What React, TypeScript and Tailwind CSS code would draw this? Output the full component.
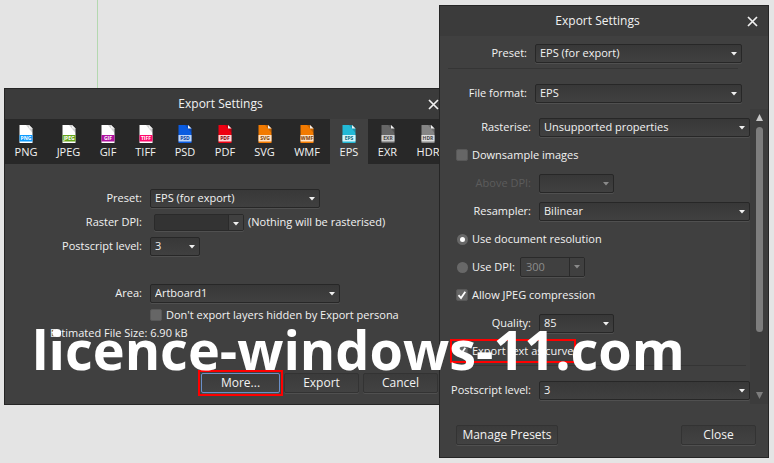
import type { ReactNode } from "react"

const formats = [
    { name: "PNG", page: "#ffffff", band: "#0d9bff", ink: "#ffffff" },
    { name: "JPEG", page: "#ffffff", band: "#65a51b", ink: "#ffffff" },
    { name: "GIF", page: "#ffffff", band: "#b0129f", ink: "#ffffff" },
    { name: "TIFF", page: "#ffffff", band: "#ff0a6c", ink: "#ffffff" },
    { name: "PSD", page: "#0a5be0", band: "#bcd4f8", ink: "#0b3f9c" },
    { name: "PDF", page: "#ee0012", band: "#ffd5d5", ink: "#7a0008" },
    { name: "SVG", page: "#f27a00", band: "#ffe2c4", ink: "#7a3c00" },
    { name: "WMF", page: "#f27a00", band: "#ffe2c4", ink: "#7a3c00" },
    { name: "EPS", page: "#22b9d6", band: "#d3f5fb", ink: "#0a6a7c" },
    { name: "EXR", page: "#666666", band: "#cfcfcf", ink: "#444444" },
    { name: "HDR", page: "#858585", band: "#dedede", ink: "#444444" },
]

function FileIcon({ name, page, band, ink }: { name: string; page: string; band: string; ink: string }) {
    return (
        <svg width="14" height="18" viewBox="0 0 14 18" aria-hidden="true">
            <path d="M0.5 0H10L13.5 3.5V18H0.5Z" fill={page} />
            <path d="M7 0H10L13.5 3.5V8Z" fill="#000" opacity="0.18" />
            <path d="M10 0L13.5 3.5H10Z" fill="#f2f2f2" />
            <rect x="0.5" y="10" width="13" height="6.5" fill={band} />
            <text x="7" y="15" textAnchor="middle" fontSize="5" fontWeight="700" fill={ink}>{name}</text>
        </svg>
    )
}

function Arrow({ dim = false }: { dim?: boolean }) {
    return (
        <svg width="6" height="4" viewBox="0 0 6 4" className="pointer-events-none absolute right-[5px] top-2" aria-hidden="true">
            <path d="M0 0H6L3 3.5Z" fill={dim ? "#8a8a8a" : "#f0f0f0"} />
        </svg>
    )
}

function Dropdown({ id, value, className, disabled = false }: { id: string; value: string; className: string; disabled?: boolean }) {
    return (
        <div className={`relative ${className}`}>
            <select id={id} disabled={disabled} className="block h-[19px] w-full appearance-none rounded-[2px] border border-[#272727] bg-linear-to-b from-[#383838] to-[#404040] pl-1 leading-4 shadow-[0_1px_0_#505050] outline-none">
                <option>{value}</option>
            </select>
            <Arrow dim={disabled} />
        </div>
    )
}

// Editable value with a drop arrow in its own cell
function Combo({ id, value, className, disabled = false }: { id: string; value: string; className: string; disabled?: boolean }) {
    return (
        <div className={`relative flex rounded-[2px] border border-[#2a2a2a] shadow-[0_1px_0_#505050] ${className}`}>
            <input id={id} defaultValue={value} disabled={disabled} className="w-0 grow border-r border-[#2a2a2a] pl-[5px] outline-none disabled:text-[#8c8c8c]" />
            <button type="button" disabled={disabled} aria-label="Show values" className="w-[14px] bg-[#404040]" />
            <svg width="6" height="4" viewBox="0 0 6 4" className="pointer-events-none absolute right-1 top-[7px]" aria-hidden="true">
                <path d="M0 0H6L3 3.5Z" fill={disabled ? "#8a8a8a" : "#f0f0f0"} />
            </svg>
        </div>
    )
}

function Checkbox({ label, checked = false }: { label: string; checked?: boolean }) {
    return (
        <label className="flex items-center gap-1 whitespace-nowrap">
            <span className="relative block size-3">
                <input type="checkbox" defaultChecked={checked} className="peer block size-3 appearance-none rounded-[2px] border border-[#585858] bg-[#666666]" />
                <svg viewBox="0 0 12 12" className="pointer-events-none absolute inset-0 hidden size-3 peer-checked:block" aria-hidden="true">
                    <path d="M2.5 6.2L5 9L9.3 2.8" fill="none" stroke="#ffffff" strokeWidth="1.8" />
                </svg>
            </span>
            {label}
        </label>
    )
}

function Radio({ id, checked = false }: { id: string; checked?: boolean }) {
    return (
        <input id={id} type="radio" name="resolution" defaultChecked={checked} className="mr-1 size-[11px] appearance-none rounded-full bg-[#686868] checked:border-[3px] checked:border-[#686868] checked:bg-white" />
    )
}

function Button({ children, className }: { children: ReactNode; className: string }) {
    return (
        <button type="button" className={`h-5 rounded-[2px] border bg-linear-to-b from-[#3b3b3b] to-[#424242] text-xs leading-4 shadow-[0_1px_0_#505050] ${className}`}>
            {children}
        </button>
    )
}

function TitleBar() {
    return (
        <header className="flex h-[30px] items-center bg-[#3b3b3b] pr-[10px]">
            <h2 className="grow pl-2 text-center text-xs">Export Settings</h2>
            <button type="button" aria-label="Close window">
                <svg width="11" height="11" viewBox="0 0 11 11" aria-hidden="true">
                    <path d="M1 1L10 10M10 1L1 10" stroke="#f0f0f0" strokeWidth="1.7" />
                </svg>
            </button>
        </header>
    )
}

function ExportWindow() {
    return (
        <section className="absolute left-1 top-[88px] w-[446px] border border-[#252525] bg-[#404040]">
            <TitleBar />
            <nav className="grid h-[45px] grid-cols-[42px_43px_36px_39px_40px_40px_39px_46px_38px_39px_42px] bg-[#282828]">
                {formats.map((f) => (
                    <button key={f.name} type="button" className={`flex flex-col items-center pt-[6px] text-xs leading-4 ${f.name === "EPS" ? "bg-[#404040]" : ""}`}>
                        <FileIcon {...f} />
                        <span className="mt-px text-[11px]">{f.name}</span>
                    </button>
                ))}
            </nav>
            <form className="pt-[22px]">
                <div className="grid auto-rows-[24px] grid-cols-[137px_1fr] items-center gap-x-2">
                    <label htmlFor="preset" className="text-right">Preset:</label>
                    <Dropdown id="preset" value="EPS (for export)" className="w-[170px]" />
                    <label htmlFor="raster-dpi" className="text-right">Raster DPI:</label>
                    <div className="flex items-center gap-1 pl-1">
                        <Combo id="raster-dpi" value="" className="h-[17px] w-[90px] bg-[#333333]" />
                        <span>(Nothing will be rasterised)</span>
                    </div>
                    <label htmlFor="ps-level" className="text-right">Postscript level:</label>
                    <Dropdown id="ps-level" value="3" className="w-[50px]" />
                </div>
                <div className="mt-[23px] grid grid-cols-[137px_1fr] items-center gap-x-2">
                    <label htmlFor="area" className="text-right leading-6">Area:</label>
                    <Dropdown id="area" value="Artboard1" className="w-[190px]" />
                    <div className="col-start-2 h-[18px]">
                        <Checkbox label="Don't export layers hidden by Export persona" />
                    </div>
                </div>
                <p className="pl-[45px]">Estimated File Size: 6.90 kB</p>
                <div className="mb-[11px] mt-[30px] flex items-center justify-end gap-1 pr-[11px]">
                    <div className="-m-[3px] border-2 border-[#ff0000] p-px">
                        <Button className="block w-[79px] border-[#6a8fc8]">More...</Button>
                    </div>
                    <Button className="w-[75px] border-[#333333]">Export</Button>
                    <Button className="w-[75px] border-[#333333]">Cancel</Button>
                </div>
            </form>
        </section>
    )
}

function SettingsWindow() {
    return (
        <section className="absolute left-[439px] top-[5px] w-[330px] border border-[#252525] bg-[#404040]">
            <TitleBar />
            <form>
                <div className="grid grid-cols-[87px_207px] items-center gap-x-2 pt-[5px]">
                    <label htmlFor="s-preset" className="text-right leading-6">Preset:</label>
                    <Dropdown id="s-preset" value="EPS (for export)" className="w-full" />
                    <hr className="col-span-2 mb-3 ml-2 mr-1 mt-[3px] border-[#353535]" />
                    <label htmlFor="format" className="text-right leading-6">File format:</label>
                    <Dropdown id="format" value="EPS" className="w-full" />
                </div>
                <div className="mt-1 flex">
                    <div className="grow pt-1">
                        <div className="flex h-7 items-center gap-2">
                            <label htmlFor="rasterise" className="w-[91px] text-right">Rasterise:</label>
                            <Dropdown id="rasterise" value="Unsupported properties" className="grow" />
                        </div>
                        <div className="flex h-7 items-center pl-4">
                            <Checkbox label="Downsample images" />
                        </div>
                        <div className="flex h-7 items-center gap-2">
                            <label htmlFor="above-dpi" className="w-[91px] text-right text-[#5c5c5c]">Above DPI:</label>
                            <Dropdown id="above-dpi" value="" className="w-[75px]" disabled />
                        </div>
                        <div className="flex h-7 items-center gap-2">
                            <label htmlFor="resampler" className="w-[91px] text-right">Resampler:</label>
                            <Dropdown id="resampler" value="Bilinear" className="grow" />
                        </div>
                        <div className="flex h-7 items-center pl-[17px]">
                            <Radio id="use-document" checked />
                            <label htmlFor="use-document">Use document resolution</label>
                        </div>
                        <div className="flex h-7 items-center pl-[17px]">
                            <Radio id="use-dpi" />
                            <label htmlFor="use-dpi" className="w-12">Use DPI:</label>
                            <Combo id="dpi" value="300" className="h-5 w-[65px]" disabled />
                        </div>
                        <div className="flex h-7 items-center pl-4">
                            <Checkbox label="Allow JPEG compression" checked />
                        </div>
                        <div className="flex h-7 items-center gap-2">
                            <label htmlFor="quality" className="w-[91px] text-right">Quality:</label>
                            <Dropdown id="quality" value="85" className="w-[75px]" />
                        </div>
                        <div className="flex h-7 items-center pl-[10px]">
                            <div className="flex h-6 w-[126px] items-center border-2 border-[#ff0000] pl-1">
                                <Checkbox label="Export text as curves" checked />
                            </div>
                        </div>
                        <hr className="mb-[10px] ml-4 mr-1 border-[#353535]" />
                        <div className="flex h-7 items-center gap-2">
                            <label htmlFor="s-level" className="w-[91px] whitespace-nowrap text-right">Postscript level:</label>
                            <Dropdown id="s-level" value="3" className="grow" />
                        </div>
                    </div>
                    <div className="flex w-[18px] flex-col items-center bg-[#3c3c3c] py-[5px]" aria-hidden="true">
                        <svg width="7" height="7" viewBox="0 0 7 7"><path d="M3.5 0L7 7H0Z" fill="#c8c8c8" /></svg>
                        <div className="mt-[6px] h-[205px] w-[7px] rounded-full bg-[#7d7d7d]" />
                        <svg className="mt-auto" width="7" height="7" viewBox="0 0 7 7"><path d="M0 0H7L3.5 7Z" fill="#7d7d7d" /></svg>
                    </div>
                </div>
                <div className="flex justify-between pb-3 pl-4 pr-3 pt-[21px]">
                    <Button className="w-[102px] border-[#333333]">Manage Presets</Button>
                    <Button className="w-[75px] border-[#333333]">Close</Button>
                </div>
            </form>
        </section>
    )
}

export default function App() {
    return (
        <main className="relative min-h-screen overflow-hidden bg-[#e4e4e4] font-['Open_Sans','Noto_Sans',sans-serif] text-[11px] leading-5 text-[#f2f2f2]">
            <div className="absolute left-[97px] top-0 h-[88px] w-px bg-[#b4d8b0]" />
            <ExportWindow />
            <SettingsWindow />
            <p className="pointer-events-none absolute left-8 top-[317px] whitespace-nowrap text-[54px] font-bold leading-[64px] text-white">
                licence-windows-11.com
            </p>
        </main>
    )
}
